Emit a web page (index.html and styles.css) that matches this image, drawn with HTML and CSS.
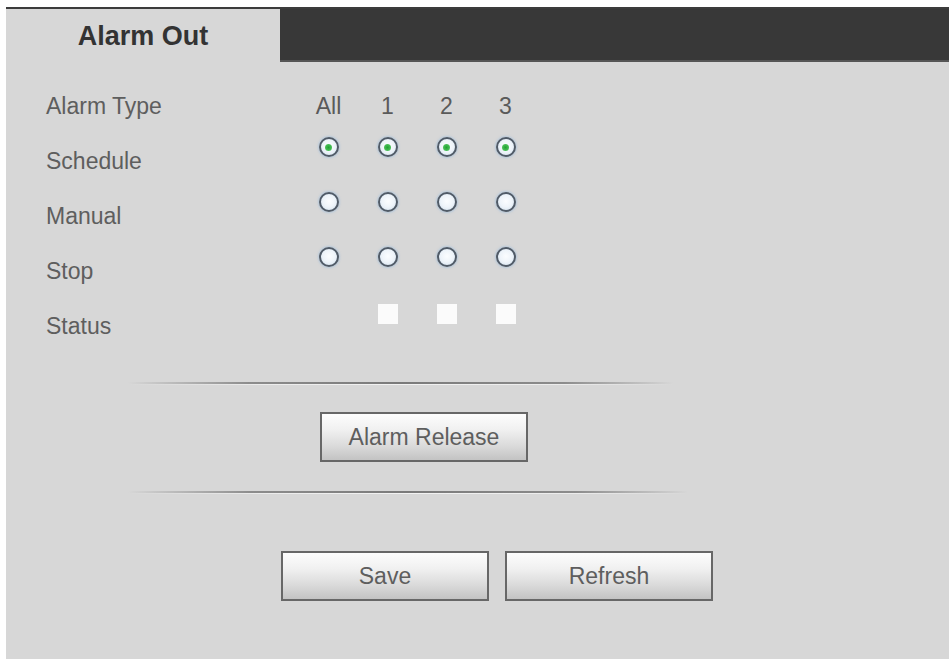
FILE: index.html
```html
<!DOCTYPE html>
<html>
<head>
<meta charset="utf-8">
<title>Alarm Out</title>
<link rel="stylesheet" href="styles.css">
</head>
<body>
<div class="panel">
  <div class="header">
    <div class="tab">Alarm Out</div>
    <div class="bar"></div>
  </div>
  <div class="form">
    <div class="row">
      <div class="label">Alarm Type</div>
      <div class="cell head">All</div>
      <div class="cell head">1</div>
      <div class="cell head">2</div>
      <div class="cell head">3</div>
    </div>
    <div class="row">
      <div class="label">Schedule</div>
      <div class="cell"><span class="radio checked"></span></div>
      <div class="cell"><span class="radio checked"></span></div>
      <div class="cell"><span class="radio checked"></span></div>
      <div class="cell"><span class="radio checked"></span></div>
    </div>
    <div class="row">
      <div class="label">Manual</div>
      <div class="cell"><span class="radio"></span></div>
      <div class="cell"><span class="radio"></span></div>
      <div class="cell"><span class="radio"></span></div>
      <div class="cell"><span class="radio"></span></div>
    </div>
    <div class="row">
      <div class="label">Stop</div>
      <div class="cell"><span class="radio"></span></div>
      <div class="cell"><span class="radio"></span></div>
      <div class="cell"><span class="radio"></span></div>
      <div class="cell"><span class="radio"></span></div>
    </div>
    <div class="row">
      <div class="label">Status</div>
      <div class="cell"></div>
      <div class="cell"><span class="status"></span></div>
      <div class="cell"><span class="status"></span></div>
      <div class="cell"><span class="status"></span></div>
    </div>
  </div>
  <div class="sep sep1"></div>
  <div class="release-row">
    <button class="btn release">Alarm Release</button>
  </div>
  <div class="sep sep2"></div>
  <div class="actions">
    <button class="btn">Save</button>
    <button class="btn">Refresh</button>
  </div>
</div>
</body>
</html>
```
FILE: styles.css
```css
html, body {
  margin: 0;
  padding: 0;
  background: #ffffff;
}
body {
  font-family: "Liberation Sans", Arial, sans-serif;
}
.panel {
  margin: 7px 2px 0 6px;
  background: #d7d7d7;
  height: 652px;
  overflow: hidden;
}
.header {
  display: flex;
  height: 55px;
  border-top: 2px solid #3c3c3c;
  box-sizing: border-box;
}
.tab {
  width: 274px;
  display: flex;
  align-items: center;
  justify-content: center;
  font-weight: bold;
  font-size: 27px;
  color: #333333;
  padding-top: 2px;
  box-sizing: border-box;
}
.bar {
  flex: 1;
  background: #383838;
  border-bottom: 2px solid #555555;
}
.form {
  padding: 17px 0 0 40px;
}
.row {
  display: grid;
  grid-template-columns: 253px repeat(4, 59px);
  height: 55px;
}
.label {
  font-size: 23px;
  line-height: 55px;
  color: #5e5e5e;
}
.cell {
  display: flex;
  justify-content: center;
  align-items: flex-start;
}
.cell.head {
  font-size: 23px;
  line-height: 55px;
  color: #5a5a5a;
}
.radio {
  margin-top: 3px;
  width: 20px;
  height: 20px;
  box-sizing: border-box;
  border-radius: 50%;
  border: 2px solid #505b68;
  background: radial-gradient(circle at 50% 45%, #fbfdff 0%, #eef4fa 50%, #cfdeec 100%);
  box-shadow: 0 0 2px 1px rgba(160, 190, 220, 0.6);
  display: flex;
  align-items: center;
  justify-content: center;
}
.radio.checked::after {
  content: "";
  width: 7px;
  height: 7px;
  border-radius: 50%;
  background: radial-gradient(circle, #22a234 0%, #45bd55 60%, #92d39a 100%);
}
.status {
  margin-top: 5px;
  width: 20px;
  height: 20px;
  background: #fbfbfb;
}
.sep {
  height: 3px;
  margin-left: 122px;
  background:
    linear-gradient(to right, rgba(140,140,140,0) 0%, #8c8c8c 22%, #7a7a7a 50%, #8c8c8c 80%, rgba(140,140,140,0) 100%) top / 100% 2px no-repeat,
    linear-gradient(to right, rgba(250,250,250,0) 0%, #ececec 25%, #f2f2f2 50%, #ececec 80%, rgba(250,250,250,0) 100%) bottom / 100% 1px no-repeat;
}
.sep1 {
  margin-top: 28px;
  width: 545px;
}
.sep2 {
  margin-top: 29px;
  width: 560px;
}
.release-row {
  margin-top: 27px;
  padding-left: 314px;
  display: flex;
}
.btn {
  width: 208px;
  height: 50px;
  border: 2px solid #676767;
  background: linear-gradient(to bottom, #fdfdfd 0%, #f0f0f0 35%, #dadada 70%, #c3c3c3 100%);
  font-family: "Liberation Sans", Arial, sans-serif;
  font-size: 23px;
  color: #5e5e5e;
  padding: 0;
  margin: 0;
  box-sizing: border-box;
}
.actions {
  margin-top: 57px;
  padding-left: 275px;
  display: flex;
  gap: 16px;
}
```
